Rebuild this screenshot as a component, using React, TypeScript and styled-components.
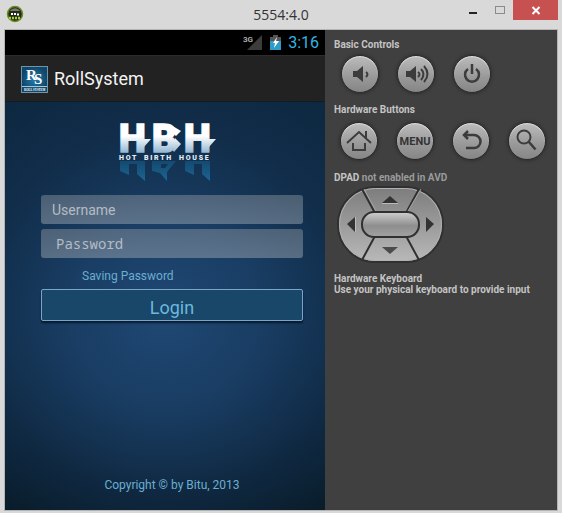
import React from "react";
import styled, { createGlobalStyle, css } from "styled-components";

const GlobalStyle = createGlobalStyle`
  *, *::before, *::after { box-sizing: border-box; }
  body { margin: 0; background: #d9d9d9; font-family: Roboto, "Liberation Sans", sans-serif; }
  button, input { font: inherit; margin: 0; padding: 0; border: 0; }
`;

const Window = styled.div`
  display: flex;
  flex-direction: column;
  min-height: 100vh;
  background: #d9d9d9;
`;

const TitleBar = styled.header`
  display: grid;
  grid-template-columns: 1fr auto 1fr;
  height: 29px;
`;

const AppMark = styled.svg`
  width: 18px;
  height: 18px;
  margin: 5px 0 0 6px;
`;

const WindowTitle = styled.h1`
  margin: 0;
  font: 400 14px/29px "Open Sans", sans-serif;
  color: #333;
`;

const WindowActions = styled.div`
  display: flex;
  justify-content: flex-end;
  padding-right: 4px;
`;

const WindowButton = styled.button<{ $close?: boolean }>`
  width: ${(p) => (p.$close ? 45 : 27)}px;
  height: 20px;
  background: ${(p) => (p.$close ? "#c75050" : "transparent")};
  svg { display: block; margin: 0 auto; }
`;

const Workspace = styled.main`
  flex: 1;
  display: grid;
  grid-template-columns: 320fr 232fr;
  margin: 0 4px 2px;
  border: 1px solid #b4b4b4;
`;

const Phone = styled.section`
  display: flex;
  flex-direction: column;
  min-width: 0;
  background: #000;
`;

const StatusBar = styled.div`
  display: flex;
  align-items: center;
  justify-content: flex-end;
  height: 25px;
  padding-right: 6px;
  color: #33b5e5;
`;

const Signal = styled.svg`
  width: 20px;
  height: 17px;
  margin-right: 7px;
`;

const Battery = styled.svg`
  width: 11px;
  height: 15px;
  margin-right: 7px;
`;

const Clock = styled.time`
  font-size: 16px;
  line-height: 25px;
`;

const ActionBar = styled.div`
  display: flex;
  align-items: center;
  gap: 6px;
  height: 47px;
  padding: 1px 16px 0;
  background: #222;
  border-top: 1px solid #2c2c2c;
  border-bottom: 1px solid #111c24;
`;

const AppLogo = styled.svg`
  width: 27px;
  height: 27px;
`;

const AppName = styled.h2`
  margin: 0;
  font-weight: 400;
  font-size: 18px;
  line-height: 24px;
  color: #f3f3f3;
`;

const Screen = styled.form`
  flex: 1;
  display: flex;
  flex-direction: column;
  padding: 22px 22px 16px 36px;
  background:
    radial-gradient(ellipse 82% 64% at 50% 52%, rgba(31, 72, 116, 1) 0%, rgba(27, 64, 104, 0.9) 35%, rgba(20, 49, 82, 0.55) 70%, rgba(12, 34, 54, 0) 100%),
    linear-gradient(#0d2840, #0d2a42 55%, #081a26);
`;

const HouseLogo = styled.svg`
  width: 100px;
  height: 60px;
  margin: 0 0 11px 77px;
  overflow: visible;
`;

const Field = styled.input<{ $mono?: boolean }>`
  width: 100%;
  height: 29px;
  margin-bottom: 5px;
  padding: 0 ${(p) => (p.$mono ? 15 : 11)}px;
  border-radius: 3px;
  background: linear-gradient(rgba(160, 165, 170, 0.4), rgba(160, 170, 180, 0.48));
  color: #e2e6ea;
  font-size: 14px;
  ${(p) => p.$mono && css`font-family: "Noto Sans Mono", "DejaVu Sans Mono", monospace;`}
  &::placeholder { color: #b4bcc4; opacity: 1; }
`;

const SaveRow = styled.label`
  display: flex;
  align-items: center;
  height: 16px;
  margin: 5px 0;
  font-size: 12px;
  line-height: 16px;
  color: #6aaed0;
`;

const SaveBox = styled.input`
  appearance: none;
  width: 41px;
  height: 16px;
`;

const LoginButton = styled.button`
  height: 32px;
  padding-top: 5px;
  border: 1px solid #7aa5c8;
  border-radius: 2px;
  background: #194769;
  box-shadow: 0 2px 2px rgba(4, 18, 34, 0.8);
  color: #6cb8dd;
  font-size: 18px;
  line-height: 25px;
`;

const Copyright = styled.p`
  margin: auto 0 0;
  text-align: center;
  font-size: 12px;
  line-height: 18px;
  color: #6aaed0;
`;

const Controls = styled.aside`
  min-width: 0;
  padding: 9px 8px 0 9px;
  background: #404040;
`;

const Heading = styled.h3`
  margin: 0;
  font-weight: 700;
  font-size: 10px;
  line-height: 11px;
  color: #c4c4c4;
  span { color: #9b9b9b; }
`;

const Keys = styled.div<{ $last?: boolean }>`
  display: flex;
  gap: 18px;
  padding: ${(p) => (p.$last ? "7px 0 12px 6px" : "5px 0 11px 7px")};
`;

const RoundKey = styled.button`
  flex: 0 0 38px;
  height: 38px;
  border-radius: 50%;
  border: 1px solid #2b2b2b;
  background: linear-gradient(#bcbcbc, #989898 60%, #868686);
  box-shadow: inset 0 1px 1px #e2e2e2, 0 0 3px 1px #303030;
  color: #333;
  font-weight: 700;
  font-size: 11px;
  svg { display: block; width: 36px; height: 36px; }
`;

const Dpad = styled.svg`
  display: block;
  width: 107px;
  height: 77px;
  margin: 3px 0 10px 3px;
`;

function KeyGlyph({ children }: { children: React.ReactNode }) {
  return (
    <svg viewBox="0 0 36 36" fill="none" stroke="#3c3c3c" strokeWidth="2.500" aria-hidden="true">
      {children}
    </svg>
  );
}

function HbhLogo() {
  return (
    <HouseLogo viewBox="0 0 100 60" role="img" aria-label="Hot Birth House">
      <defs>
        <linearGradient id="steel" gradientUnits="userSpaceOnUse" x1="0" y1="1" x2="0" y2="29">
          <stop offset="0.4" stopColor="#fff" />
          <stop offset="1" stopColor="#8fb4cf" />
        </linearGradient>
        <linearGradient id="drip" x1="0" y1="0" x2="0" y2="1">
          <stop stopColor="#134a70" />
          <stop offset="1" stopColor="#1d6594" />
        </linearGradient>
      </defs>
      <g
        fill="url(#steel)"
        stroke="url(#steel)"
        strokeWidth="1.500"
        fontFamily="Roboto"
        fontWeight="900"
        fontSize="38"
      >
        <text x="1" y="28">H</text>
        <text x="34" y="28">B</text>
        <text x="66" y="28">H</text>
      </g>
      <g fill="url(#steel)">
        <path d="M24 15h9l-7 8h-2z" />
        <path d="M53 1l10 6-5 5-6-5z" />
        <path d="M57 14l6 6-7 8-3-4z" />
        <path d="M89 15h9l-7 8h-2z" />
      </g>
      <g fill="url(#drip)">
        <path d="M2 37h9v14l-9-4zM19 37h8v20l-8-7zM11 37h8v3h-8z" />
        <path d="M34 37h24l-9 11v9l-7-8-8-2zM43 40v4h4l3-4z" fillRule="evenodd" />
        <path d="M67 37h9v14l-9-4zM84 37h8v20l-8-7zM76 37h8v3h-8z" />
      </g>
      <g fill="#e6eef4" fontFamily="Roboto" fontWeight="900" fontSize="7">
        <text x="1" y="36">H O T</text>
        <text x="26" y="36">B I R T H</text>
        <text x="61" y="36">H O U S E</text>
      </g>
    </HouseLogo>
  );
}

function DirectionPad() {
  return (
    <Dpad viewBox="0 0 107 77" role="img" aria-label="Directional pad">
      <defs>
        <linearGradient id="pad" x1="0" y1="0" x2="0" y2="1">
          <stop stopColor="#7c7c7c" />
          <stop offset="1" stopColor="#b9b9b9" />
        </linearGradient>
        <linearGradient id="center" x1="0" y1="0" x2="0" y2="1">
          <stop stopColor="#d0d0d0" />
          <stop offset="0.55" stopColor="#8e8e8e" />
          <stop offset="1" stopColor="#a2a2a2" />
        </linearGradient>
      </defs>
      <rect x="1" y="1" width="105" height="75" rx="37" fill="url(#pad)" stroke="#303030" strokeWidth="2" />
      <rect x="2.500" y="2.500" width="102" height="72" rx="36" fill="none" stroke="#b0b0b0" strokeWidth="1" />
      <path d="M25 3l13 24M82 3L69 27M25 74l13-24M82 74L69 50" stroke="#303030" strokeWidth="2" />
      <path d="M27 3l12 22M84 3L71 25" stroke="#a4a4a4" strokeWidth="1" />
      <rect x="25" y="26" width="57" height="25" rx="12" fill="url(#center)" stroke="#303030" strokeWidth="2" />
      <path d="M53 10l8 7H45zM18 31v15l-8-8zM89 31v15l8-8z" fill="#333" />
      <path d="M45 61h16l-8 7z" fill="#4b4b4b" />
      <path d="M45 17.500h16M18.500 31v15" stroke="#bbb" strokeWidth="1" />
    </Dpad>
  );
}

export default function App() {
  return (
    <Window>
      <GlobalStyle />
      <TitleBar>
        <AppMark viewBox="0 0 18 18" aria-hidden="true">
          <circle cx="9" cy="9" r="7.500" fill="#242b18" stroke="#6b8d22" strokeWidth="1.500" />
          <path d="M4 6a6 6 0 0 1 10 0z" fill="#777" />
          <path d="M5 9h2M8 9h2M11 9.500h2" stroke="#fff" strokeWidth="2" />
          <path d="M3 13h12" stroke="#a4cf38" strokeWidth="2.500" strokeDasharray="2 1" />
        </AppMark>
        <WindowTitle>5554:4.0</WindowTitle>
        <WindowActions>
          <WindowButton aria-label="Minimize">
            <svg width="10" height="20"><path d="M1 13h8" stroke="#222" strokeWidth="2" /></svg>
          </WindowButton>
          <WindowButton aria-label="Maximize">
            <svg width="10" height="20"><rect x="0.500" y="6.500" width="9" height="7" fill="none" stroke="#8b8b8b" /></svg>
          </WindowButton>
          <WindowButton $close aria-label="Close">
            <svg width="10" height="20"><path d="M1.500 7l7 7M8.500 7l-7 7" stroke="#fff" strokeWidth="2" /></svg>
          </WindowButton>
        </WindowActions>
      </TitleBar>

      <Workspace>
        <Phone>
          <StatusBar>
            <Signal viewBox="0 0 20 17" aria-label="3G">
              <path d="M19 1v15H4z" fill="#3c3c3c" />
              <text x="0" y="8" fill="#aaa" fontFamily="Roboto" fontWeight="700" fontSize="8">3G</text>
            </Signal>
            <Battery viewBox="0 0 11 15" aria-hidden="true">
              <path d="M3 0h5v2h3v13H0V2h3z" fill="#555" />
              <path d="M0 6h11v9H0z" fill="#2d9cc6" />
              <path d="M7 2L3 8h2l-1 5 5-7H6z" fill="#fff" />
            </Battery>
            <Clock>3:16</Clock>
          </StatusBar>
          <ActionBar>
            <AppLogo viewBox="0 0 27 27" aria-hidden="true">
              <defs>
                <radialGradient id="badge">
                  <stop stopColor="#237dac" />
                  <stop offset="1" stopColor="#114567" />
                </radialGradient>
              </defs>
              <rect x="0.500" y="0.500" width="26" height="26" fill="url(#badge)" stroke="#6f95ad" />
              <g fill="#fff" fontFamily="Liberation Serif" fontWeight="700">
                <text x="5" y="14" fontSize="15">R</text>
                <text x="13" y="18" fontSize="15">S</text>
                <text x="3" y="25" fontSize="3">ROLL SYSTEM</text>
              </g>
              <path d="M1 20.500h25" stroke="#aac6d6" strokeWidth="1" />
            </AppLogo>
            <AppName>RollSystem</AppName>
          </ActionBar>
          <Screen onSubmit={(e) => e.preventDefault()}>
            <HbhLogo />
            <Field type="text" placeholder="Username" aria-label="Username" />
            <Field $mono type="password" placeholder="Password" aria-label="Password" />
            <SaveRow>
              <SaveBox type="checkbox" />
              Saving Password
            </SaveRow>
            <LoginButton type="submit">Login</LoginButton>
            <Copyright>Copyright © by Bitu, 2013</Copyright>
          </Screen>
        </Phone>

        <Controls>
          <Heading>Basic Controls</Heading>
          <Keys>
            <RoundKey aria-label="Volume down">
              <KeyGlyph>
                <path d="M11 15h4l6-5v16l-6-5h-4z" fill="#3c3c3c" stroke="none" />
                <path d="M24 16q3 2 0 5" strokeWidth="2" />
              </KeyGlyph>
            </RoundKey>
            <RoundKey aria-label="Volume up">
              <KeyGlyph>
                <path d="M8 15h4l6-5v16l-6-5H8z" fill="#3c3c3c" stroke="none" />
                <path d="M20 16q3 2 0 5M23 13q5 5 0 11M26 10q7 8 0 16" strokeWidth="2" />
              </KeyGlyph>
            </RoundKey>
            <RoundKey aria-label="Power">
              <KeyGlyph>
                <path d="M14 13a7 7 0 1 0 8 0M18 8v10" />
              </KeyGlyph>
            </RoundKey>
          </Keys>
          <Heading>Hardware Buttons</Heading>
          <Keys $last>
            <RoundKey aria-label="Home">
              <KeyGlyph>
                <path d="M6 20L18 9l12 11M25 15V8M12 20v7h12v-7" strokeWidth="2" />
              </KeyGlyph>
            </RoundKey>
            <RoundKey>MENU</RoundKey>
            <RoundKey aria-label="Back">
              <KeyGlyph>
                <path d="M15 8l-4 4 4 4M11 12h10a6.500 6.500 0 0 1 0 13h-8" />
              </KeyGlyph>
            </RoundKey>
            <RoundKey aria-label="Search">
              <KeyGlyph>
                <circle cx="15" cy="14" r="6.500" strokeWidth="2" />
                <path d="M19.500 18.500l7 8" />
              </KeyGlyph>
            </RoundKey>
          </Keys>
          <Heading>DPAD <span>not enabled in AVD</span></Heading>
          <DirectionPad />
          <Heading>Hardware Keyboard</Heading>
          <Heading as="p">Use your physical keyboard to provide input</Heading>
        </Controls>
      </Workspace>
    </Window>
  );
}
